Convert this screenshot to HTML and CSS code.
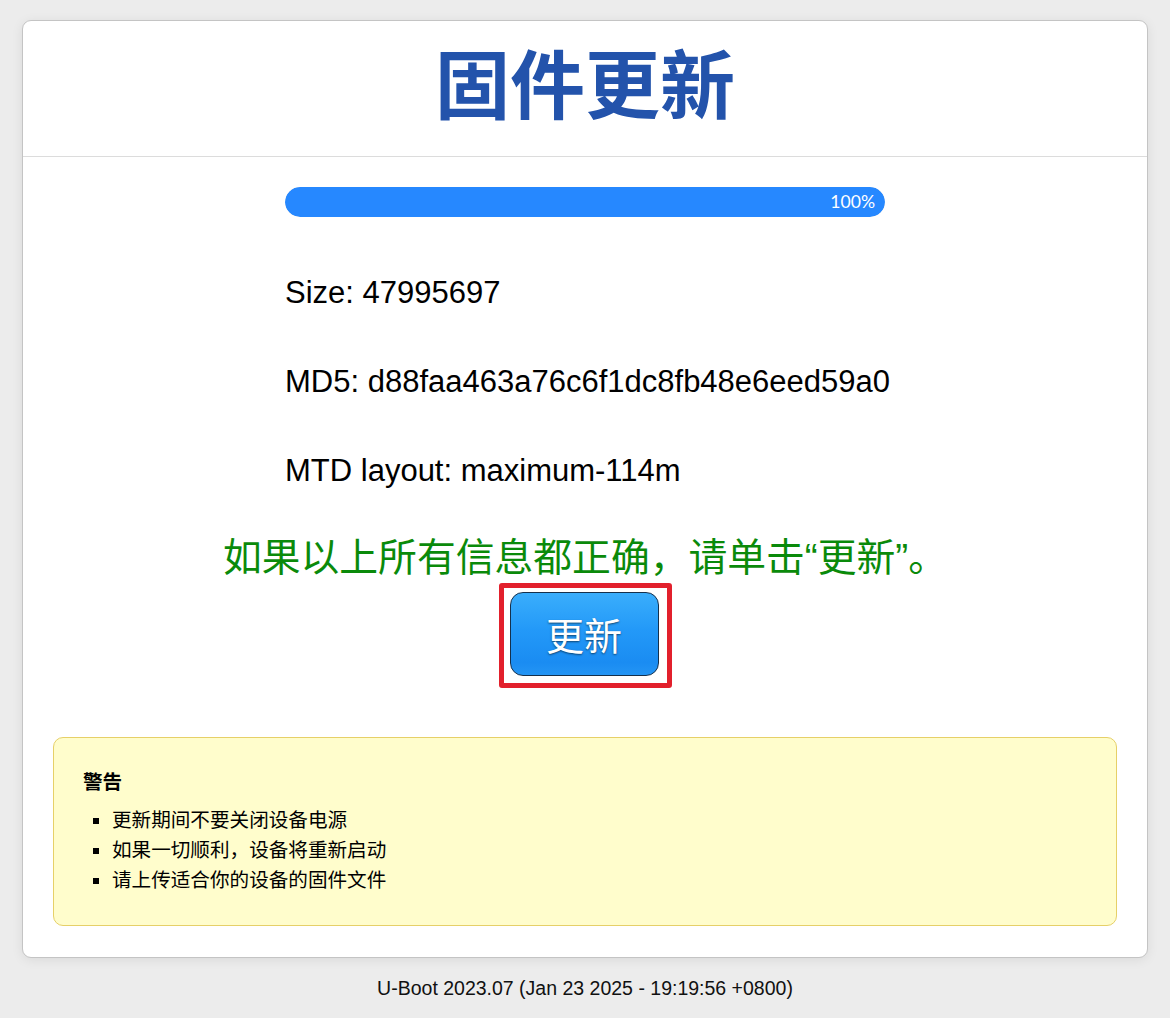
FILE: index.html
```html
<!DOCTYPE html>
<html lang="zh-CN">
<head>
<meta charset="utf-8">
<title>固件更新</title>
<link rel="stylesheet" href="styles.css">
</head>
<body>
<main class="card">
  <header class="card-header">
    <h1 class="title">固件更新</h1>
  </header>
  <section class="content">
    <div class="progress">
      <div class="progress-fill" style="width:100%"><span class="progress-label">100%</span></div>
    </div>
    <div class="info">
      <p class="info-line">Size: 47995697</p>
      <p class="info-line">MD5: d88faa463a76c6f1dc8fb48e6eed59a0</p>
      <p class="info-line">MTD layout: maximum-114m</p>
    </div>
    <p class="confirm">如果以上所有信息都正确，请单击“更新”。</p>
    <div class="highlight">
      <button class="update-btn" type="button">更新</button>
    </div>
    <div class="warning">
      <strong class="warning-title">警告</strong>
      <ul class="warning-list">
        <li>更新期间不要关闭设备电源</li>
        <li>如果一切顺利，设备将重新启动</li>
        <li>请上传适合你的设备的固件文件</li>
      </ul>
    </div>
  </section>
</main>
<footer class="footer">U-Boot 2023.07 (Jan 23 2025 - 19:19:56 +0800)</footer>
</body>
</html>
```

FILE: styles.css
```css
* { box-sizing: border-box; }

html, body {
  margin: 0;
  padding: 0;
}

body {
  background: #ececec;
  font-family: "Liberation Sans", "Noto Sans CJK SC", sans-serif;
  color: #000;
  padding-top: 20px;
}

.card {
  width: 1126px;
  margin: 0 auto;
  background: #fff;
  border: 1px solid #c4c4c4;
  border-radius: 9px;
  box-shadow: 0 2px 12px rgba(0, 0, 0, 0.08);
}

.card-header {
  height: 136px;
  border-bottom: 1px solid #dcdcdc;
  padding-top: 22px;
  text-align: center;
}

.title {
  margin: 0;
  font-family: "Noto Sans CJK SC", sans-serif;
  font-size: 75px;
  line-height: 1;
  font-weight: 700;
  color: #2353ab;
}

.content {
  padding: 30px 30px 31px;
  display: flex;
  flex-direction: column;
  align-items: center;
}

.progress {
  width: 600px;
  height: 30px;
  border-radius: 15px;
  background: #e6e6e6;
  overflow: hidden;
}

.progress-fill {
  height: 100%;
  background: #2688ff;
  border-radius: 15px;
  display: flex;
  align-items: center;
  justify-content: flex-end;
  padding-right: 10px;
}

.progress-label {
  color: #fff;
  font-family: "Lato", "Liberation Sans", sans-serif;
  font-size: 17.6px;
  line-height: 1;
}

.info {
  width: 600px;
  margin-top: 58px;
  display: flex;
  flex-direction: column;
  gap: 53px;
}

.info-line {
  margin: 0;
  font-size: 31px;
  line-height: 36px;
  white-space: nowrap;
}

.confirm {
  margin: 47px 0 0;
  font-size: 38.8px;
  line-height: 44px;
  color: #0a8a0a;
  white-space: nowrap;
}

.highlight {
  margin-top: 3px;
  border: 5px solid #e2202c;
  border-radius: 3px;
  padding: 4px 8px 7px 6px;
  background: #fff;
}

.update-btn {
  display: block;
  width: 149px;
  height: 84px;
  border: 1px solid #15304c;
  border-radius: 13px;
  background: linear-gradient(to bottom, #3aaefc 0%, #2399f8 45%, #1a8cf2 85%, #2495f4 100%);
  color: #fff;
  font-family: "Noto Sans CJK SC", sans-serif;
  font-size: 38px;
  line-height: 1;
  text-shadow: 0 1px 2px rgba(0, 0, 0, 0.55);
  cursor: pointer;
  padding: 0;
}

.warning {
  align-self: stretch;
  margin-top: 49px;
  background: #fffdcc;
  border: 1px solid #e6d068;
  border-radius: 10px;
  padding: 29px 31px 30px 29px;
}

.warning-title {
  display: block;
  font-family: "Liberation Sans", "Noto Sans CJK SC", sans-serif;
  font-size: 19.6px;
  line-height: 30px;
  font-weight: 700;
}

.warning-list {
  margin: 8px 0 0;
  padding-left: 29px;
  list-style: square;
  font-size: 19.6px;
  line-height: 30px;
}

.footer {
  margin-top: 15px;
  text-align: center;
  font-size: 19.5px;
  line-height: 30px;
  color: #111;
}
```
